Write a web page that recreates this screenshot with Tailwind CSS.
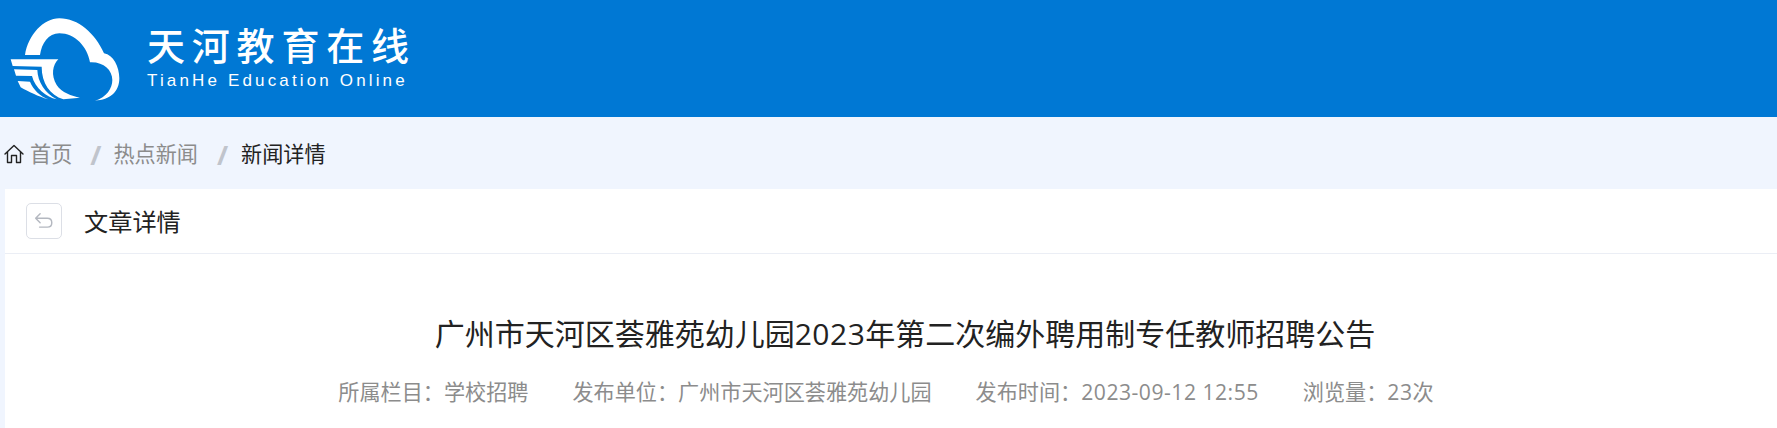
<!DOCTYPE html>
<html lang="zh-CN">
<head>
<meta charset="utf-8">
<script src="https://cdn.jsdelivr.net/npm/@tailwindcss/browser@4"></script>
</head>
<body class="h-[428px] overflow-hidden bg-[#f0f5fe] font-['Open_Sans','Noto_Sans_CJK_SC',sans-serif]">
<header class="flex h-[117px] bg-[#0078d4] text-white">
  <svg class="mt-[10px] h-[100px] w-[130px] shrink-0" viewBox="0 0 390 300" fill="#fff">
    <path d="M75 135C85 75 130 25 178 25C235 25 285 70 312 130C340 135 358 170 358 205C358 245 330 270 285 272C320 262 337 235 337 210C337 180 310 155 270 157C262 110 225 70 178 70C145 70 125 100 120 135Z"/>
    <path d="M32 148L175 148C158 165 152 195 170 225C185 248 215 258 240 263L190 268C150 255 125 220 125 170L38 168Z"/>
    <path d="M42 178L112 180C113 215 135 250 170 268C140 262 105 235 96 198L48 197Z"/>
    <path d="M53 213L90 215C100 240 120 258 145 268C115 260 85 245 62 232Z"/>
  </svg>
  <div class="mt-[20px] ml-[17px] flex flex-col self-start">
    <div class="flex h-[47px] w-[262px] items-center justify-between font-['Noto_Sans_CJK_SC',sans-serif] text-[38px] leading-none font-medium"><span>天</span><span>河</span><span>教</span><span>育</span><span>在</span><span>线</span></div>
    <div class="mt-[4px] font-['Liberation_Sans',sans-serif] text-[17px] leading-[20px] tracking-[3.15px] whitespace-nowrap">TianHe Education Online</div>
  </div>
</header>
<nav class="flex h-[72px] items-center pt-[2px] pl-[4px] text-[21.13px] text-[#8c8c8c]">
  <svg class="mr-[6px] h-[20px] w-[20px]" viewBox="0 0 20 20" fill="none" stroke="#222" stroke-width="1.4" stroke-linejoin="round" stroke-linecap="round"><path d="M1 10L10 1.5L19 10M3.5 8V18.5H7.5V11.5H12.5V18.5H16.5V8"/></svg>
  <span>首页</span>
  <span class="mr-[12px] ml-[18px] text-[27px] leading-none font-bold text-[#c0c4cc]">/</span>
  <span>热点新闻</span>
  <span class="mr-[13px] ml-[19px] text-[27px] leading-none font-bold text-[#c0c4cc]">/</span>
  <span class="text-[#222]">新闻详情</span>
</nav>
<main class="ml-[5px] h-[239px] bg-white">
  <div class="flex h-[65px] items-center border-b border-[#ebeef5] pl-[21px]">
    <button class="flex h-[36px] w-[36px] items-center justify-center rounded-[5px] border border-[#dcdfe6] bg-white">
      <svg class="h-[20px] w-[20px]" viewBox="0 0 18 18" fill="none" stroke="#b4b8c0" stroke-width="1.3" stroke-linecap="round" stroke-linejoin="round"><path d="M5.5 2.5L1.5 6.5L5.5 10.5M1.5 6.5H12C14.5 6.5 16 8.2 16 10.5C16 12.8 14.5 14.5 12 14.5H5"/></svg>
    </button>
    <h2 class="ml-[22px] pt-[2px] text-[24.2px] font-normal text-[#222]">文章详情</h2>
  </div>
  <div class="pl-[28px] text-center">
    <h1 class="mt-[58px] text-[30px] leading-[44px] font-normal text-[#222]">广州市天河区荟雅苑幼儿园<span class="tracking-[0.5px]">2023</span>年第二次编外聘用制专任教师招聘公告</h1>
    <div class="mt-[21px] flex justify-center pl-[6px] text-[21.13px] leading-[30px] text-[#8c8c8c]">
      <span class="mr-[44px]">所属栏目：学校招聘</span>
      <span class="mr-[44px]">发布单位：广州市天河区荟雅苑幼儿园</span>
      <span class="mr-[44px]">发布时间：<span class="tracking-[0.5px]">2023-09-12 12:55</span></span>
      <span class="mr-[44px]">浏览量：<span class="tracking-[0.5px]">23</span>次</span>
    </div>
  </div>
</main>
</body>
</html>
